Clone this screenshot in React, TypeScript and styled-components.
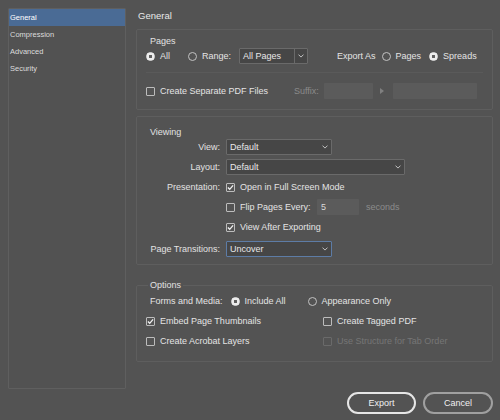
import React from 'react';
import styled, { createGlobalStyle } from 'styled-components';

const Global = createGlobalStyle`
  html, body { margin: 0; padding: 0; background: #535353; }
  body {
    font-family: "Liberation Sans", Arial, sans-serif;
    font-size: 9px;
    color: #e2e2e2;
  }
  * { box-sizing: border-box; }
`;

const Page = styled.div`
  width: 500px;
  height: 420px;
  padding: 8px 7px 0 8px;
  display: flex;
  flex-direction: column;
`;

const Body = styled.div`
  display: grid;
  grid-template-columns: 118px 1fr;
  column-gap: 8px;
  height: 381px;
`;

const Sidebar = styled.div`
  border: 1px solid #5f5f5f;
  border-radius: 1px;
  background: #525252;
`;

const SideItem = styled.div<{ $active?: boolean }>`
  height: 17px;
  line-height: 17px;
  padding-left: 1px;
  font-size: 7.5px;
  color: ${p => (p.$active ? '#ffffff' : '#dcdcdc')};
  background: ${p => (p.$active ? '#4a6b95' : 'transparent')};
`;

const Main = styled.div`
  display: flex;
  flex-direction: column;
  min-width: 0;
`;

const Title = styled.div`
  height: 16px;
  line-height: 16px;
  padding-left: 4px;
  font-size: 9.5px;
  color: #e8e8e8;
`;

const Panel = styled.div`
  margin: 5px 0 0 2px;
  border: 1px solid #5e5e5e;
  border-radius: 2px;
  padding: 5px 9px 10px;
`;

const ViewingPanel = styled(Panel)`
  margin-top: 6px;
  padding: 9px 9px 7px;
`;

const GroupLabel = styled.div`
  line-height: 12px;
  margin: 0 0 1px 4px;
`;

const Row = styled.div<{ $mt?: number }>`
  display: flex;
  align-items: center;
  height: 16px;
  margin-top: ${p => p.$mt ?? 0}px;
`;

const Divider = styled.div`
  height: 1px;
  background: #5a5a5a;
  margin-top: 8px;
`;

const Option = styled.span<{ $ml?: number; $dim?: boolean; $w?: number }>`
  display: inline-flex;
  align-items: center;
  gap: 5px;
  margin-left: ${p => p.$ml ?? 0}px;
  color: ${p => (p.$dim ? '#767676' : '#e4e4e4')};
  white-space: nowrap;
  ${p => (p.$w ? `flex: 0 0 ${p.$w}px;` : '')}
`;

const Radio = styled.span<{ $on?: boolean }>`
  width: 9px;
  height: 9px;
  flex: none;
  border-radius: 50%;
  border: 1px solid ${p => (p.$on ? '#ececec' : '#c2c2c2')};
  background: ${p =>
    p.$on ? 'radial-gradient(circle, #5e5e5e 0 1.4px, #ececec 1.9px)' : 'transparent'};
`;

const Box = styled.span<{ $disabled?: boolean }>`
  width: 9px;
  height: 9px;
  flex: none;
  border: 1px solid ${p => (p.$disabled ? '#6a6a6a' : '#bcbcbc')};
  border-radius: 1px;
  display: flex;
  align-items: center;
  justify-content: center;
`;

const Check = () => (
  <svg width="7" height="7" viewBox="0 0 7 7">
    <path d="M0.9 3.5 L2.7 5.3 L6.1 1.3" fill="none" stroke="#f2f2f2" strokeWidth="1.3" />
  </svg>
);

const Checkbox = ({ on, disabled }: { on?: boolean; disabled?: boolean }) => (
  <Box $disabled={disabled}>{on && <Check />}</Box>
);

const Plain = styled.span<{ $ml?: number; $dim?: boolean }>`
  margin-left: ${p => p.$ml ?? 0}px;
  color: ${p => (p.$dim ? '#8b8b8b' : '#e4e4e4')};
  white-space: nowrap;
`;

const Select = styled.div<{ $w: number; $focus?: boolean; $ml?: number }>`
  width: ${p => p.$w}px;
  height: 16px;
  flex: none;
  margin-left: ${p => p.$ml ?? 0}px;
  display: flex;
  align-items: center;
  background: #464646;
  border: 1px solid ${p => (p.$focus ? '#5d7ca6' : '#6a6a6a')};
  border-radius: 1px;
  color: #e8e8e8;
`;

const SelectText = styled.span`
  flex: 1;
  padding-left: 3px;
  white-space: nowrap;
`;

const Caret = styled.span<{ $split?: boolean }>`
  width: 13px;
  height: 100%;
  display: flex;
  align-items: center;
  justify-content: center;
  border-left: ${p => (p.$split ? '1px solid #6a6a6a' : 'none')};
`;

const Chevron = () => (
  <svg width="6" height="4" viewBox="0 0 6 4">
    <path d="M0.5 0.6 L3 3.1 L5.5 0.6" fill="none" stroke="#cfcfcf" strokeWidth="0.9" />
  </svg>
);

const Dropdown = (props: { value: string; w: number; split?: boolean; focus?: boolean; ml?: number }) => (
  <Select $w={props.w} $focus={props.focus} $ml={props.ml}>
    <SelectText>{props.value}</SelectText>
    <Caret $split={props.split}>
      <Chevron />
    </Caret>
  </Select>
);

const Field = styled.div<{ $w: number; $ml?: number }>`
  width: ${p => p.$w}px;
  height: 16px;
  flex: none;
  margin-left: ${p => p.$ml ?? 0}px;
  background: #5b5b5b;
  border-radius: 1px;
  padding-left: 4px;
  line-height: 16px;
  color: #dadada;
`;

const Arrow = styled.span<{ $ml?: number }>`
  width: 0;
  height: 0;
  flex: none;
  margin-left: ${p => p.$ml ?? 0}px;
  border-left: 4px solid #808080;
  border-top: 3px solid transparent;
  border-bottom: 3px solid transparent;
`;

const FieldLabel = styled.span`
  width: 74px;
  flex: none;
  text-align: right;
  margin-right: 6px;
  white-space: nowrap;
`;

const OptionsSet = styled.fieldset`
  margin: 14px 0 0 2px;
  padding: 0 9px 12px;
  border: 1px solid #5e5e5e;
  border-radius: 2px;
  min-inline-size: 0;
`;

const Legend = styled.legend`
  padding: 0 2px;
  margin-left: 2px;
  line-height: 12px;
`;

const OptionGrid = styled.div`
  display: grid;
  grid-template-columns: 177px 1fr;
  grid-auto-rows: 16px;
  row-gap: 4px;
  margin-top: 4px;
  align-items: center;
`;

const Footer = styled.div`
  display: flex;
  justify-content: flex-end;
  gap: 7px;
  margin-top: 3px;
`;

const Button = styled.button<{ $primary?: boolean }>`
  width: ${p => (p.$primary ? 69 : 70)}px;
  height: 22px;
  padding: 0;
  border: 2px solid ${p => (p.$primary ? '#e6e6e6' : '#a0a0a0')};
  border-radius: 11px;
  background: transparent;
  color: #f0f0f0;
  font-family: inherit;
  font-size: 9px;
`;

const sections = ['General', 'Compression', 'Advanced', 'Security'];

export default function App() {
  return (
    <Page>
      <Global />
      <Body>
        <Sidebar>
          {sections.map((s, i) => (
            <SideItem key={s} $active={i === 0}>
              {s}
            </SideItem>
          ))}
        </Sidebar>
        <Main>
          <Title>General</Title>

          <Panel>
            <GroupLabel>Pages</GroupLabel>
            <Row>
              <Option>
                <Radio $on />
                All
              </Option>
              <Option $ml={18}>
                <Radio />
                Range:
              </Option>
              <Dropdown value="All Pages" w={69} split ml={8} />
              <Plain $ml={29}>Export As</Plain>
              <Option $ml={6}>
                <Radio />
                Pages
              </Option>
              <Option $ml={8}>
                <Radio $on />
                Spreads
              </Option>
            </Row>
            <Divider />
            <Row $mt={10}>
              <Option $w={148}>
                <Checkbox />
                Create Separate PDF Files
              </Option>
              <Plain $dim>Suffix:</Plain>
              <Field $w={49} $ml={5} />
              <Arrow $ml={7} />
              <Field $w={84} $ml={9} />
            </Row>
          </Panel>

          <ViewingPanel>
            <GroupLabel>Viewing</GroupLabel>
            <Row>
              <FieldLabel>View:</FieldLabel>
              <Dropdown value="Default" w={106} />
            </Row>
            <Row $mt={4}>
              <FieldLabel>Layout:</FieldLabel>
              <Dropdown value="Default" w={179} />
            </Row>
            <Row $mt={4}>
              <FieldLabel>Presentation:</FieldLabel>
              <Option>
                <Checkbox on />
                Open in Full Screen Mode
              </Option>
            </Row>
            <Row $mt={4}>
              <FieldLabel />
              <Option $w={91}>
                <Checkbox />
                Flip Pages Every:
              </Option>
              <Field $w={42}>5</Field>
              <Plain $ml={7} $dim>
                seconds
              </Plain>
            </Row>
            <Row $mt={4}>
              <FieldLabel />
              <Option>
                <Checkbox on />
                View After Exporting
              </Option>
            </Row>
            <Row $mt={6}>
              <FieldLabel>Page Transitions:</FieldLabel>
              <Dropdown value="Uncover" w={106} focus />
            </Row>
          </ViewingPanel>

          <OptionsSet>
            <Legend>Options</Legend>
            <Row $mt={2}>
              <Plain $ml={4}>Forms and Media:</Plain>
              <Option $ml={8}>
                <Radio $on />
                Include All
              </Option>
              <Option $ml={22}>
                <Radio />
                Appearance Only
              </Option>
            </Row>
            <OptionGrid>
              <Option>
                <Checkbox on />
                Embed Page Thumbnails
              </Option>
              <Option>
                <Checkbox />
                Create Tagged PDF
              </Option>
              <Option>
                <Checkbox />
                Create Acrobat Layers
              </Option>
              <Option $dim>
                <Checkbox disabled />
                Use Structure for Tab Order
              </Option>
            </OptionGrid>
          </OptionsSet>
        </Main>
      </Body>
      <Footer>
        <Button $primary>Export</Button>
        <Button>Cancel</Button>
      </Footer>
    </Page>
  );
}
